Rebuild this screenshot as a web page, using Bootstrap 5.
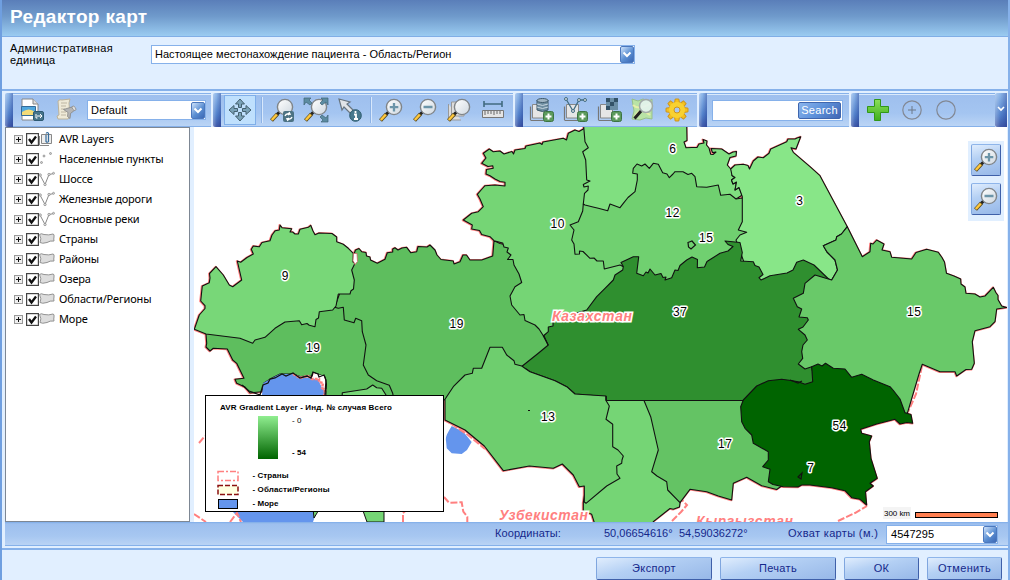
<!DOCTYPE html>
<html lang="ru">
<head>
<meta charset="utf-8">
<meta name="viewport" content="width=device-width, initial-scale=1">
<title>Редактор карт</title>
<link rel="stylesheet" href="https://cdn.jsdelivr.net/npm/bootstrap@5.3.0/dist/css/bootstrap.min.css">
<style>
body{width:1010px;height:580px;overflow:hidden;background:#e1efff;font:11px/13px "Liberation Sans",Arial,sans-serif;color:#000}
svg{display:block;overflow:visible}
.shell{height:580px;border-left:2px solid #6f9fe0;border-right:2px solid #86b1ea;overflow:hidden}
.titlebar{height:37px;background:linear-gradient(#5a7eb9,#6f9acb 45%,#9acbf1);border-bottom:1px solid #80aee6;color:#fff;font-size:19px;font-weight:700;line-height:33px;padding-left:8px;letter-spacing:.33px}
.unit{height:54px;border-bottom:2px solid #86b1ea;padding-left:8px;letter-spacing:.35px}
.unit .caption{width:141px;line-height:12px;padding-top:5px}
.combo{background:#fff;border:1px solid #86b1ea;height:19px;display:flex;align-items:center;justify-content:space-between;padding-left:3px;letter-spacing:.03px}
.drop{width:14px;height:17px;border:1px solid #4c78bd;border-radius:2px;background:linear-gradient(135deg,#cfe3fb,#5a8ed2 55%,#3c68b5)}
.bars{height:36px;padding:2px 0 0 3px;gap:2px}
.tool{height:34px;background:linear-gradient(#9ebfee,#a4c5f1 60%,#bad4f5);border-top:1px solid #86b1ea;border-bottom:1px solid #86b1ea;box-shadow:inset 0 1px #d9e9fc}
.grip{width:8px;height:34px;border-radius:2px 0 0 2px;background:linear-gradient(90deg,rgba(255,255,255,.3),transparent 45%,rgba(20,40,130,.35)),linear-gradient(#8fb8ea,#5180cb 65%,#4059a8)}
.cell{width:34px;height:32px;display:flex;align-items:center;justify-content:center}
.pan{width:32px;height:30px;background:#bfe0fd;border:1px solid #80afe9;margin-left:3px}
.split{width:2px;height:26px;background:#d8e8fc;border-left:1px solid #8cb2e6}
.find{background:linear-gradient(135deg,#8bb5ed,#5d91da 50%,#4266b3);border:1px solid #3f66ae;border-radius:2px;color:#fff;width:43px;height:17px;line-height:15px;text-align:center;letter-spacing:.3px}
.tree{width:185px;height:395px;border:1px solid #7d8794;background:#fff;margin-left:3px;padding:1px 0 0 8px;font:11px/20px "Noto Sans",sans-serif;letter-spacing:-.17px}
.tree .item{height:20px}
.tree .item span{margin-left:3px}
.plane{width:813px;height:395px;background:#fff;margin-left:4px}
.status{height:24px;width:1003px;margin-left:3px;border-top:1px solid #86b1ea;background:linear-gradient(#9dbfee,#a7c7f1 60%,#b9d3f5);color:#15288b;line-height:21px;border-bottom:1px solid #86b1ea;box-shadow:inset 0 1px #98bcec}
.status .wide{letter-spacing:.35px}
.status .mid{letter-spacing:.08px}
.foot{height:34px;border-top:2px solid #86b1ea;margin-top:2px;padding:7px 6px 0 0;gap:8px}
.face{border:1px solid;border-color:#8eb5ea #3f60a9 #3f60a9 #7fa6df;border-radius:2px;background:linear-gradient(165deg,#e0edfd,#b4d0f4 40%,#97b8e8)}
.act{height:23px;color:#15288b;font-size:11px;line-height:21px;text-align:center;letter-spacing:.35px;padding:0}
.zoomers{right:3px;top:14px;width:36px;height:80px;background:#e1efff;padding:3px;gap:7px}
.zoomers .face{width:30px;height:32px;padding:0}
.num text{font:12px "Liberation Sans",Arial,sans-serif;text-anchor:middle;paint-order:stroke;stroke:#fff;stroke-width:3px;stroke-linejoin:round}
.land text{font:italic bold 14px "Liberation Sans",Arial,sans-serif;fill:#ff8080;paint-order:stroke;stroke:#fff;stroke-width:3px}
.keys text{font:bold 8px "Liberation Sans",Arial,sans-serif}
</style>
<script src="https://cdn.jsdelivr.net/npm/bootstrap@5.3.0/dist/js/bootstrap.bundle.min.js"></script>
</head>
<body>
<svg width="0" height="0" class="position-absolute">
<defs>
<linearGradient id="lensFill" x1="0" y1="0" x2="1" y2="1"><stop offset="0" stop-color="#fff"/><stop offset="1" stop-color="#cfd8e0"/></linearGradient>
<linearGradient id="ramp" x1="0" y1="0" x2="0" y2="1"><stop offset="0" stop-color="#90ee90"/><stop offset="1" stop-color="#006400"/></linearGradient>
<linearGradient id="plusFill" x1="0" y1="0" x2="0" y2="1"><stop offset="0" stop-color="#8be05a"/><stop offset="1" stop-color="#3fae1c"/></linearGradient>
<symbol id="lens" viewBox="0 0 24 24"><path d="M9.500 14 6.500 17" stroke="#222" stroke-width="3"/><path d="M7.500 16 1.500 22.500" stroke="#5a4a20" stroke-width="4"/><path d="M6.800 16.500 1.800 22" stroke="#ffc83d" stroke-width="2.600"/><circle cx="15" cy="9" r="7.600" fill="url(#lensFill)" stroke="#808589" stroke-width="1.400"/></symbol>
<symbol id="sheets" viewBox="0 0 24 24"><path d="M1.500 22V8.500M1.500 22.500h13" stroke="#777" stroke-width="1.200" fill="none"/><path d="M3.500 20V6.500h12V20z" fill="#e6e6e6" stroke="#888"/></symbol>
<symbol id="badgePlus" viewBox="0 0 11 11"><rect x=".5" y=".5" width="10" height="10" rx="2" fill="#5c9a5c" stroke="#3c7443"/><path d="M5.500 2.500v6M2.500 5.500h6" stroke="#fff" stroke-width="2"/></symbol>
<symbol id="chev" viewBox="0 0 12 15"><path d="m2.500 5.500 3.500 3.500 3.500-3.500" fill="none" stroke="#fff" stroke-width="2"/></symbol>
<symbol id="expand" viewBox="0 0 9 9"><rect x=".5" y=".5" width="8" height="8" fill="#eee" stroke="#999"/><path d="M2 4.500h5M4.500 2v5" stroke="#111"/></symbol>
<symbol id="tick" viewBox="0 0 13 13"><rect x=".6" y=".6" width="11.800" height="11.800" fill="#fff" stroke="#444" stroke-width="1.200"/><path d="m3 6 2.500 3.500 4.500-6" fill="none" stroke="#111" stroke-width="2.300"/></symbol>
<symbol id="layers" viewBox="0 0 16 16"><path d="M.5 14V5M.5 14.500H10" stroke="#888" fill="none"/><path d="M2.500 12.500v-9h10v9z" fill="#eee" stroke="#888"/><path d="M7 4v6.500q1.500 1.500 2.500 0v-8Q8.500.5 7 2.500" fill="none" stroke="#356c9c" stroke-width="1.200"/></symbol>
<symbol id="dots" viewBox="0 0 16 16"><g fill="#ccc" stroke="#888" stroke-width=".7"><circle cx="5" cy="5" r="1"/><circle cx="11.500" cy="2.500" r="1"/><circle cx="2.500" cy="11.500" r="1"/></g></symbol>
<symbol id="line" viewBox="0 0 16 16"><path d="m1 4 5 9.500L10 3.500l5-1" fill="none" stroke="#888"/><g fill="#ddd" stroke="#888" stroke-width=".7"><circle cx="1.200" cy="4" r="1.200"/><circle cx="6" cy="13.500" r="1.200"/><circle cx="10" cy="3.500" r="1.200"/><circle cx="14.500" cy="2.300" r="1"/></g></symbol>
<symbol id="area" viewBox="0 0 16 16"><path d="M.5 3.500Q2 2 5 3.500q5 1 9-.5 1.500 0 1 3-.5 2 0 4-4-.5-7 1.500-5 1.500-7 0Q3 8 .5 3.500z" fill="#ddd" stroke="#929292"/></symbol>
</defs>
</svg>
<div class="shell d-flex flex-column">
<header class="titlebar flex-shrink-0">Редактор карт</header>
<section class="unit d-flex flex-shrink-0">
<div class="caption">Административная<br>единица</div>
<div class="combo" style="width:484px;margin-top:8px"><span>Настоящее местонахождение пациента - Область/Регион</span><span class="drop"><svg width="12" height="15"><use href="#chev"/></svg></span></div>
</section>
<div class="bars d-flex flex-shrink-0">
<div class="d-flex"><div class="grip"></div><div class="tool d-flex align-items-center" style="width:198px">
<div class="cell" style="margin-left:2px"><svg width="24" height="24"><path d="M2 1h11l5 5v16H2z" fill="#fff" stroke="#888"/><path d="M13 1v5h5" fill="#ddd" stroke="#888"/><path d="M1.500 8.500h14v9h-14z" fill="#51a7dd" stroke="#356b98"/><path d="M2 14q7-5 13 0v3H2z" fill="#f4db77"/><rect x="13.500" y="13.500" width="10" height="9" rx="1.500" fill="#47758c" stroke="#2d5972"/><path d="M16 16v4h1.500M17 18h4.500m-1.500-2 2 2-2 2" fill="none" stroke="#fff"/></svg></div>
<div class="cell"><svg width="24" height="24"><path d="M4 3q2-2 4-1l8-1-1 4 1 13-2 3H4l-1-3 2-1z" fill="#eee9d7" stroke="#bbb29c"/><path d="M7 5h6M7 8h5M7 11h4M7 14h5M7 17h5" stroke="#bdb5a2"/><path d="m9.500 11.500 10-3 2 3-5 4-.5 5-2.500-2 .5-4z" fill="#b4b4b4" stroke="#858585" stroke-width=".8"/><ellipse cx="20" cy="10.300" rx="1.500" ry="2.500" transform="rotate(-35 20 10.300)" fill="#ddd" stroke="#888" stroke-width=".7"/></svg></div>
<div class="combo" style="width:119px;height:20px;margin-left:4px;letter-spacing:.2px"><span>Default</span><span class="drop"><svg width="12" height="15"><use href="#chev"/></svg></span></div>
</div></div>
<div class="d-flex"><div class="grip"></div><div class="tool d-flex align-items-center" style="width:292px">
<div class="pan d-flex align-items-center justify-content-center"><svg width="24" height="24"><g fill="#7ba3b8" stroke="#44606e" stroke-width="1"><path id="arr" d="m12 1 4.500 5h-3v3.500h-3V6h-3z"/><use href="#arr" transform="rotate(90 12 12)"/><use href="#arr" transform="rotate(180 12 12)"/><use href="#arr" transform="rotate(270 12 12)"/></g></svg></div>
<div class="split" style="margin:0 2px 0 5px"></div>
<div class="cell"><svg width="24" height="24"><use href="#lens"/><rect x="13" y="13" width="11" height="11" rx="2" fill="#4c7283"/><path d="M15 18q1-3 5-2l-1-2m1 2-2 1M22 19q-1 3-5 2l1 2m-1-2 2-1" fill="none" stroke="#fff" stroke-width="1.300"/></svg></div>
<div class="cell"><svg width="24" height="24"><use href="#lens"/><g fill="#5c8ca2" stroke="#3f6476" stroke-width=".7"><path d="M0 0h7L5 2l3 3-2 2-4-3-2 3z"/><path d="M24 0h-7l2 2-3 3 2 2 4-3 2 3z"/><path d="M24 24h-7l2-2-3-3 2-2 4 3 2-3z"/></g></svg></div>
<div class="cell"><svg width="24" height="24"><path d="m1 1 11 3-3 2 9 9-3 3-9-9-2 3z" fill="#e1e4e8" stroke="#687580" stroke-width="1.200"/><circle cx="17.500" cy="17.500" r="5.800" fill="#47788d" stroke="#2d5a6c"/><path d="M16 16.500h2v4.500m-2 0h4M17.500 13v2" stroke="#fff" stroke-width="1.800" fill="none"/></svg></div>
<div class="split" style="margin:0 2px 0 3px"></div>
<div class="cell"><svg width="24" height="24"><use href="#lens"/><path d="M15 5v8.500M10.800 9.200h8.500" stroke="#6c95a9" stroke-width="2.300"/></svg></div>
<div class="cell"><svg width="24" height="24"><use href="#lens"/><path d="M10.500 9h9" stroke="#6c95a9" stroke-width="2.500"/></svg></div>
<div class="cell"><svg width="24" height="24"><path d="M1.500 6v16H14M4.500 4v14H17V4z" fill="#ddd" stroke="#999"/><use href="#lens"/></svg></div>
<div class="cell"><svg width="24" height="24"><path d="M3 6h18M3 3v6M21 3v6" stroke="#416b80" stroke-width="1.600"/><path d="M1.500 12.500h21v7h-21z" fill="#e5e5e5" stroke="#777"/><path d="M4 13v4m3-4v3m3-3v3m3-3v4m3-4v3m3-3v3" stroke="#666"/></svg></div>
</div></div>
<div class="d-flex"><div class="grip"></div><div class="tool d-flex align-items-center" style="width:174px">
<div class="cell" style="margin-left:1px"><svg width="24" height="24"><use href="#sheets"/><path d="M8 2v10q5.500 3 11 0V2" fill="#6d8da0" stroke="#3e596b"/><ellipse cx="13.500" cy="2.500" rx="5.500" ry="2" fill="#a0b5c3" stroke="#3e596b"/><path d="M8 6q5.500 3 11 0M8 9q5.500 3 11 0" stroke="#c7d5df" fill="none"/><use href="#badgePlus" x="14" y="13" width="11" height="11"/></svg></div>
<div class="cell"><svg width="24" height="24"><use href="#sheets"/><path d="m3 1 7 12 6-11h6" fill="none" stroke="#426d83" stroke-width="1.300"/><g fill="#ddd" stroke="#426d83"><circle cx="3" cy="1" r="1.500"/><circle cx="10" cy="13" r="1.500"/><circle cx="16" cy="2" r="1.500"/><circle cx="22" cy="2" r="1.500"/></g><use href="#badgePlus" x="14" y="13" width="11" height="11"/></svg></div>
<div class="cell"><svg width="24" height="24"><use href="#sheets"/><path d="M9 0h12v12H9z" fill="#6b8ea5"/><path d="M9 0h4v4H9zM17 0h4v4h-4zM13 4h4v4h-4zM9 8h4v4H9z" fill="#335267"/><use href="#badgePlus" x="14" y="13" width="11" height="11"/></svg></div>
<div class="cell"><svg width="24" height="24"><path d="m1 1 6 2 5-2 6 2 3-2v20l-6-1-6 2-8-1 2-8z" fill="#b9e3a6" stroke="#98bf89"/><path d="M2 7q6 6 18-2M4 19Q8 8 19 17" fill="none" stroke="#e6efa9" stroke-width="2"/><path d="M10.500 12.500 3.500 20.500" stroke="#222" stroke-width="3"/><circle cx="15" cy="8" r="6.500" fill="#e4f3ee" fill-opacity=".9" stroke="#a1aaa8" stroke-width="1.500"/></svg></div>
<div class="cell"><svg width="24" height="24"><g fill="#f4c01d" stroke="#cf951b"><path id="tooth" d="M9.500 5 10.200 1h3.600l.7 4v14l-.7 4h-3.600l-.7-4z"/><use href="#tooth" transform="rotate(45 12 12)"/><use href="#tooth" transform="rotate(90 12 12)"/><use href="#tooth" transform="rotate(135 12 12)"/></g><circle cx="12" cy="12" r="8" fill="#f8d131"/><circle cx="12" cy="12" r="3" fill="#a9c8f2" stroke="#cf951b"/></svg></div>
</div></div>
<div class="d-flex"><div class="grip"></div><div class="tool d-flex align-items-center" style="width:142px"><div class="combo" style="width:131px;height:21px;margin-left:5px;padding-right:1px"><span></span><span class="find">Search</span></div></div></div>
<div class="d-flex"><div class="grip"></div><div class="tool d-flex align-items-center" style="width:136px">
<div class="cell" style="margin-left:2px"><svg width="24" height="24"><path d="M8.500 1.500h6v7h8v6h-8v8h-6v-8h-7v-6h7z" fill="url(#plusFill)" stroke="#319718"/></svg></div>
<div class="cell"><svg width="24" height="24"><circle cx="12" cy="12" r="9.200" fill="none" stroke="#828894" stroke-width="1.200"/><path d="M12 8v8M8 12h8" stroke="#6d7888"/></svg></div>
<div class="cell"><svg width="24" height="24"><circle cx="12" cy="12" r="9.200" fill="none" stroke="#828894" stroke-width="1.200"/></svg></div>
</div><div class="grip" style="width:12px"><svg width="12" height="34"><path d="m3 14 3 3 3-3" fill="none" stroke="#fff" stroke-width="1.600"/></svg></div></div>
</div>
<main class="d-flex flex-shrink-0" style="height:395px">
<div class="tree flex-shrink-0">
<div class="item d-flex align-items-center"><svg width="9" height="9"><use href="#expand"/></svg><svg width="13" height="13" style="margin-left:3px"><use href="#tick"/></svg><svg width="16" height="16" class="me-0"><use href="#layers"/></svg><span class="ps-1 ms-0">AVR Layers</span></div>
<div class="item d-flex align-items-center"><svg width="9" height="9"><use href="#expand"/></svg><svg width="13" height="13" style="margin-left:3px"><use href="#tick"/></svg><svg width="16" height="16"><use href="#dots"/></svg><span class="ps-1 ms-0">Населенные пункты</span></div>
<div class="item d-flex align-items-center"><svg width="9" height="9"><use href="#expand"/></svg><svg width="13" height="13" style="margin-left:3px"><use href="#tick"/></svg><svg width="16" height="16"><use href="#line"/></svg><span class="ps-1 ms-0">Шоссе</span></div>
<div class="item d-flex align-items-center"><svg width="9" height="9"><use href="#expand"/></svg><svg width="13" height="13" style="margin-left:3px"><use href="#tick"/></svg><svg width="16" height="16"><use href="#line"/></svg><span class="ps-1 ms-0">Железные дороги</span></div>
<div class="item d-flex align-items-center"><svg width="9" height="9"><use href="#expand"/></svg><svg width="13" height="13" style="margin-left:3px"><use href="#tick"/></svg><svg width="16" height="16"><use href="#line"/></svg><span class="ps-1 ms-0">Основные реки</span></div>
<div class="item d-flex align-items-center"><svg width="9" height="9"><use href="#expand"/></svg><svg width="13" height="13" style="margin-left:3px"><use href="#tick"/></svg><svg width="16" height="16"><use href="#area"/></svg><span class="ps-1 ms-0">Страны</span></div>
<div class="item d-flex align-items-center"><svg width="9" height="9"><use href="#expand"/></svg><svg width="13" height="13" style="margin-left:3px"><use href="#tick"/></svg><svg width="16" height="16"><use href="#area"/></svg><span class="ps-1 ms-0">Районы</span></div>
<div class="item d-flex align-items-center"><svg width="9" height="9"><use href="#expand"/></svg><svg width="13" height="13" style="margin-left:3px"><use href="#tick"/></svg><svg width="16" height="16"><use href="#area"/></svg><span class="ps-1 ms-0">Озера</span></div>
<div class="item d-flex align-items-center"><svg width="9" height="9"><use href="#expand"/></svg><svg width="13" height="13" style="margin-left:3px"><use href="#tick"/></svg><svg width="16" height="16"><use href="#area"/></svg><span class="ps-1 ms-0">Области/Регионы</span></div>
<div class="item d-flex align-items-center"><svg width="9" height="9"><use href="#expand"/></svg><svg width="13" height="13" style="margin-left:3px"><use href="#tick"/></svg><svg width="16" height="16"><use href="#area"/></svg><span class="ps-1 ms-0">Море</span></div>
</div>
<div class="plane position-relative flex-shrink-0">
<svg width="813" height="395" viewBox="194 127 813 395" style="overflow:hidden">
<defs><g id="regions" stroke-linejoin="round">
<!-- 19, centre -->
<path fill="#5ebe5e" d="M350 265 354 254 355.500 250 359 248.500 361.700 251.700 366 252.500 366.500 256 370 257 370.500 260 377.300 263.300 385 259.300 387.300 252.700 392.700 252 392.700 249 395 247.700 398 250 402 248 406.700 247.300 410.700 252.700 416.700 251.700 418 246.500 427 247 430 245 435 250 437 255 441 259.500 453.300 261 454 264 460 261.700 463 255 466.500 255 470 260 481.700 260 492.700 256 494 240.700 500 243.500 530 250 560 340 550 360 500 380 444 400 330 400 330 320z"/>
<!-- 19, west -->
<path fill="#5ebe5e" d="M206 334 206.700 343.300 206 347 210 351 213.300 348.300 227.300 349 232.700 360 236.700 363.300 244 378.300 235 379.300 236.700 383.300 245 387 250 393 262 391.700 264 383 272 378 280 374 293 374 300 376.500 312 376 313 372.500 318 374 325 377 326.500 384 325.500 400 394 400 392.700 393.300 389.300 385.300 376.700 380.700 368.300 375 363.300 365 366 345 362.300 331.700 361.700 320.700 355.700 318.300 354 322.700 344.300 320 343.300 307.300 338.300 308.300 330 306 260 300 212 320z"/>
<path fill="#78d778" d="M342.300 392.700 366.700 389 372.700 385 376.700 387.700 381.700 388.300 386 395 386 400 342 400z"/>
<!-- 9 -->
<path fill="#78d778" d="M194.300 329.300 199.300 315 205 308.500 205 305.700 200.700 301 202.300 286 209.300 282.700 210 278 209.500 273.500 216 266.700 223.300 275 229.300 285 232.700 286.700 241.700 280 237.300 261 240.700 262.300 247 257.500 253.300 254 251.300 249.300 253.300 246 259.300 246.700 262 242.500 270 240.700 272 235 275.300 230.700 279.300 230 280 225 282 227.700 291.700 228.700 290 232 292.700 232 295 234 298.300 234 300 229.300 308.300 227.300 310.700 225.300 313 231 315 234.700 319 233 332 233.500 336.700 237 336.700 241.700 343.300 244.300 348.300 248.300 353.300 253.300 353 262 355 263.300 351.700 270 354.300 280 353.500 289 351 290.700 350 294 338.300 294 336 306 332.700 310 319.300 311.700 318.500 318 316 319.500 315 326.700 309.300 325.300 307 323.500 301.700 324.700 299.300 320.700 285 322 275 328.300 265 337.300 255 340 252.700 343.300 240 338.300 206 334z"/>
<!-- 10 -->
<path fill="#75d575" d="M494 240.700 490 236.700 481.700 234.500 479.500 230.500 471.700 229 472.300 225 466 221.500 463.300 220 471.700 213.300 478.300 211.700 483.300 206.700 480 199 477.300 194.300 482 189 485 185.700 495 185 505 186 505 182.300 500 181.500 495 179 490 175.700 486 174 486.500 169.500 493.300 168.300 492.700 165.700 488 166.500 481.700 163.300 486 158 483.300 153.300 489.300 149 493.300 151.700 500 151 504 154 512 151.500 513.500 154 515 150 525 148.500 526 146 540 143 542 144.500 543 142 563.300 138.300 566.500 140 568.300 133.300 575 130 579 131.500 583.300 129 586 127 610 127 610 200 640 260 600 320 553 330 543.500 336 539 329 535 325 525 320.500 524 314.500 520 315 511.700 305 510 296 515 286.700 521.700 282.500 519 274 514 265 513 259.500 507.500 259.500 511 255 507 252 508.300 248 504 247 502.700 243z"/>
<!-- 6 -->
<path fill="#80df80" d="M583.300 122 585 141.700 588.300 147.700 582.700 151.700 585.700 160 586.700 180 590 181 583.300 184.500 584 187 588.300 186 588 190 584.500 193.300 583.300 204 600 235 700 220 738 197.700 742.300 195 739 187.500 735 190 736.500 182 733 184 731.500 180 735 177.500 732 175.500 732.500 172 730.700 169 727.300 165 730 157.500 736 156 736.500 151.500 733 152 729 154 721.700 149 711 148.500 712.500 152.500 716 152 713 154.500 710.700 154.300 709 148 706.500 145 707 141 703 139.500 704 143 699 144 697 147.500 692 147.500 686 147.700 684 142 687 140.500 686.700 122z"/>
<!-- 12 -->
<path fill="#70d070" d="M583.300 204 582.700 211 578.300 221.700 570 225 574 230 571.700 240 574 244 575 254.300 579.500 254 579.500 251 583 251.500 590 258.300 594 258 597 261 603.300 261 604.300 269 620 265 624 267 640 290 700 290 755 270 750 200 742 198 736 199 730 194.300 720.700 195.300 718.300 185 706.700 187.300 696.700 186.700 695 176.700 691.700 173.300 688 174.500 683 171.700 675 171.700 673 174 669.300 177.700 667 174 662.700 172.700 658.300 164.300 653.300 163.300 649.300 168.300 645 164 641.700 166 637 164 633.300 168.300 632.700 173.300 637.300 174 637.300 180 635 191.700 628 197.500 623.300 203.300 620 207.700 610 204 607.700 210.700 598.300 208.300 593 207 585 205z"/>
<!-- 3 -->
<path fill="#88e688" d="M730.700 169 735 165 743.300 164.300 748 165.500 749.500 169 753.300 161 758 157 763.300 157.700 769 153.300 770.700 149 786.700 141.700 788 139 795 139 797 138 800.700 136.700 798.300 143 796 149 791 147.700 793.300 152.300 810 166.700 820 175.700 847.300 226.700 841.500 234 836.700 236.700 836 240 823.300 245.700 827 252 835 260 837.500 270 831.700 280 815 275 800 290 760 290 745 265 736 240 740 235 746.700 232.300 738.300 230 742.300 221.700 742.300 196.700 739 187.500 735 190 736.500 182 733 184 731.500 180 735 177.500 732 175.500z"/>
<!-- 37 -->
<path fill="#2f8f2f" d="M517.300 370 538.300 353.300 548.300 345 543.300 336 548.300 331.700 548.300 327 553 326 553 320 586.700 310 596.700 296.700 605 288.300 613.300 280 615 275 622.700 270 623.300 266.500 621 262.500 633.300 256.700 638.700 256.700 636.700 273.300 643.300 275.700 646 272 648 273 650 269 655 275 661 273.500 663 277.500 666 277 665 280 671.700 277.700 675 270 678 270.500 680 265.500 686.700 260 692 257 697.500 259.500 697.300 267.700 704.500 267 707 261.500 720 253.300 728 251 733 246.500 728 244.500 725 241 740 242.500 742.300 252.500 740.700 261 753.300 261.700 755 265.500 759 267 763 274.500 759 277.700 761 280 770 275.700 787 273 793 270 796.700 262.300 803.300 260 814 265 840 290 820 370 790 420 742 400.500 606 400.500 606 396.500 575 394 566.700 386.700 555 380.700 530 371.700 526 369z"/>
<!-- 15, east -->
<path fill="#69c969" d="M847.300 226.700 862.300 256.700 870 251.700 870.700 243.300 873 244 876.700 240 884 244 882 250 890 251.700 891.700 257.300 911.700 259 916 252.500 926.700 249.300 938.300 252.300 942 257.500 944.500 262 946.500 273.300 954 276 960.700 279 961 284 965 287 966 293.300 975 294 980 297 985 296 993.300 287.300 996 292.700 998 295.500 998 299.500 1001.700 306 1006.700 307.500 996.700 309 995 321.700 990 326.700 975 330.700 972.300 341.700 974.300 363.300 971.700 369.300 966 369.500 956.700 376 955 371.700 940 371.700 922.300 364.300 919 374 907.300 413.300 850 410 815 385 811.700 366.700 805 369 798.300 364 802.700 358.300 801.700 351.700 803 345 807.300 340 805 335 798.300 329.300 803 327 808.300 320 807.300 317.700 799 317 801.700 309 797.300 306.700 793.300 298.300 803.300 293.300 805 283.300 815 275 831.700 280 837.500 270 835 260 827 252 823.300 245.700 836 240 836.700 236.700 841.500 234z"/>
<!-- 17 and the strip west of it -->
<path fill="#64c364" d="M644 400.500H760L790 480 776.700 489.500 761.700 485.700 746.700 477.300 733.300 483.300 731.700 500 718.300 496 706.700 491.700 690 489.300 680 502.700 640 480z"/>
<path fill="#75d575" d="M600 400.500H644L650.700 416.700 658.300 450 651.700 471.700 657 476 666.700 481.700 667.700 490 680 502.700 679.500 507 673.300 509.300 670 508.500 653.300 521.700 650 528H596L594 521.700 591.700 514.300 583.300 511 583.300 502.700z"/>
<!-- 13 -->
<path fill="#6ece6e" d="M445 399.300 453.300 386.700 465 375 472.300 373.300 473.300 368.300 481.700 368.300 490 347.300 502.300 347.300 506.700 355 514 360.700 515 364.300 521.700 366 526 369 530 371.700 555 380.700 566.700 386.700 575 394 606 396 606 400.500 609.300 406 606 419.300 612.700 424.300 612.700 446.700 618 450 623.300 456 622 460 621.700 463.300 616.700 466 617 474 620 478.300 606.700 486 586 503.300 584.300 502 584.300 486 579.300 486.700 573.300 475 562.300 464 553.300 468.300 529.300 466 503.300 470.700 484.300 446 465 430 445 420z"/>
<!-- 54 -->
<path fill="#006400" d="M743.300 400 756.700 386 768.300 380.700 781.700 379.300 791 380.500 798.300 381.700 805 384.300 812.700 381.700 811.700 366.700 818 364 822 366 825.500 363.300 833.300 368.300 845 369 851.700 377.300 861.700 374.300 873.300 380 890 386.700 893 390 900 399 905 412.700 911 414.500 912.700 423.300 907 422.500 900 424 895 419.300 876.700 424 860.700 429.300 861.700 433.300 871.700 436 869.300 441.700 871 458.300 877.300 478.300 870 483.300 873.300 486 865.500 491.700 866.700 505 860 499.300 851.700 497.700 845 490.700 831.700 487.700 810 485 801.700 485 798 487 783.300 486.700 773 484.500 768.300 481.700 770 469.300 762.700 466.700 768.300 460 768.300 451.700 753.300 443.300 751.700 435 745 428.300 741.700 421.700 740.700 406.700z"/>
</g></defs>
<path d="M233 512 240 508H318L315 516 313 522H243zM262 396 263.300 383 272 378 280 374H293L300 376.500 320 380 323 387 325.500 396zM451.700 426C449 431 445 436 446 441L446.700 448.300 451.700 453.300 461.700 454 467 450 471.700 442 463.300 431.700z" fill="#6495ed"/>
<g fill="none" stroke="#ff8080" stroke-width="2" stroke-dasharray="7 2">
<path d="M444 419 468 435 485 449M194 514 206 522M230 522 237 513 241 522M403 522V513L409 508M444 497 449 502.700 461.700 502.300 463.300 511.700 467.300 516.700V522M922 366 916 394 908 412M199 443 205 436M672 521 681 512 687 505 682 500M838 521 855 513 867 506"/>
</g>
<use href="#regions" stroke="#ff8080" stroke-width="2.200" transform="translate(-.4 .2)"/>
<use href="#regions" stroke="#111" stroke-width="1.100"/>
<path d="M262 396 263.300 383 272 378 280 374H293L300 376.500 320 380 323 387 325.500 396z" fill="#6495ed"/>
<path d="M313 373 324 376 326 384 322 388 318 379z" fill="#fff"/>
<path d="M293 374 300 378 308 376 312 379 319 379 319 382 323 383 322 388 325 390 324 396" fill="none" stroke="#ff8080" stroke-width="2.500" stroke-dasharray="3 1"/>
<path d="M242 385 249 391 260 395 263 385 268 383 270 379 275 378 282 374 286 376 293 373 300 378 307 376 311 378 313 372 318 374 319 377 324 375 326 380 325 396" fill="none" stroke="#111" stroke-width="1.300"/>
<path d="M313 508h7l-6 10zM362 508h22v14h-17z" fill="#75d575" stroke="#111"/>
<path d="M353.500 253.500h3.500l.5 8-2.500 3-2-4z" fill="#fff" stroke="#c66" stroke-width=".8"/>
<path d="M688 242.500 692 241 695.500 245 691 249 688.500 247zM528 410.500h2M798 477l4-4-1 6zM606 396v4.500M544 336l4 9M790 380l8 3 4-2" fill="none" stroke="#111" stroke-width="1.200"/>
<g class="num"><text x="285" y="280">9</text><text x="313" y="352" textLength="14">19</text><text x="456.500" y="328" textLength="14">19</text><text x="557.500" y="228" textLength="14">10</text><text x="672.500" y="153">6</text><text x="672.500" y="217" textLength="14">12</text><text x="706" y="242" textLength="14">15</text><text x="799.500" y="205">3</text><text x="680" y="316" textLength="14">37</text><text x="914" y="316" textLength="14">15</text><text x="548" y="421" textLength="14">13</text><text x="725" y="448" textLength="14">17</text><text x="839.500" y="430" textLength="14">54</text><text x="810.500" y="472">7</text></g>
<g class="land"><text x="552" y="321" textLength="80">Казахстан</text><text x="499" y="520" textLength="89">Узбекистан</text><text x="696" y="526" textLength="97">Кыргызстан</text></g>
<g class="keys">
<rect x="205.500" y="395.500" width="238" height="116" fill="#fff" stroke="#000"/>
<text x="220" y="410" textLength="172">AVR Gradient Layer - Инд. № случая Всего</text>
<rect x="258" y="416" width="20" height="43" fill="url(#ramp)"/>
<text x="292" y="423" style="font-weight:400">- 0</text><text x="292" y="455" textLength="14">- 54</text>
<rect x="218" y="471.500" width="20" height="9" fill="#fff" stroke="#ff8080" stroke-width="1.500" stroke-dasharray="6 2 2 2"/>
<rect x="218" y="485.500" width="20" height="9" fill="#ffffe0" stroke="#8b1010" stroke-width="1.500" stroke-dasharray="5 2"/>
<rect x="218.500" y="499.500" width="19" height="9" fill="#6495ed" stroke="#000"/>
<text x="252.500" y="478" textLength="36">- Страны</text><text x="252.500" y="492" textLength="77">- Области/Регионы</text><text x="252.500" y="506" textLength="26">- Море</text>
</g>
<rect x="883" y="507" width="28" height="12" fill="#f4f4f4"/><text x="884" y="516" textLength="26" style="font:8px 'Liberation Sans',sans-serif">300 km</text>
<rect x="915.500" y="512.500" width="82" height="5" fill="#ff7f50" stroke="#000"/>
</svg>
<div class="zoomers position-absolute d-flex flex-column">
<button type="button" class="face d-flex align-items-center justify-content-center flex-shrink-0"><svg width="24" height="24"><use href="#lens"/><path d="M15 5v8.500M10.800 9.200h8.500" stroke="#6c95a9" stroke-width="2.300"/></svg></button>
<button type="button" class="face d-flex align-items-center justify-content-center flex-shrink-0"><svg width="24" height="24"><use href="#lens"/><path d="M10.500 9h9" stroke="#6c95a9" stroke-width="2.500"/></svg></button>
</div>
</div>
</main>
<div class="status d-flex flex-shrink-0">
<span class="mid" style="width:109px;margin-left:490px">Координаты:</span><span style="width:75px">50,06654616°</span><span style="width:109px">54,59036272°</span><span class="wide" style="width:98px">Охват карты (м.)</span>
<div class="combo text-black" style="width:112px;margin-top:2px;padding-left:4px"><span>4547295</span><span class="drop"><svg width="12" height="15"><use href="#chev"/></svg></span></div>
</div>
<footer class="foot d-flex justify-content-end flex-shrink-0">
<button type="button" class="face act" style="width:116px">Экспорт</button><button type="button" class="face act" style="width:116px">Печать</button><button type="button" class="face act" style="width:75px">ОК</button><button type="button" class="face act" style="width:75px">Отменить</button>
</footer>
</div>
</body>
</html>
